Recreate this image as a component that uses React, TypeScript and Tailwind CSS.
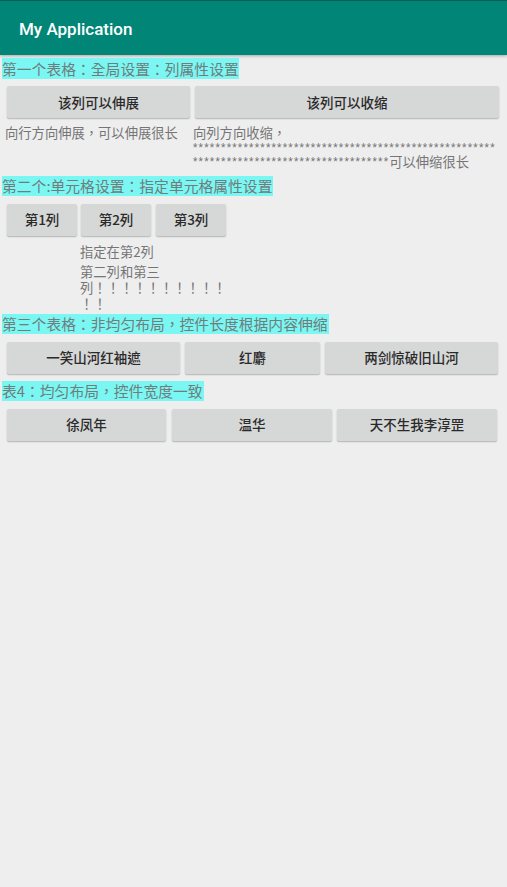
import React from "react";

const cjk = '"Noto Sans CJK TC", "Noto Sans CJK SC", sans-serif';

function Btn({ w, ml = 0, children }: { w: number; ml?: number; children: React.ReactNode }) {
  return (
    <div
      className="h-[32px] rounded-[2px] bg-[#d6d7d7] shadow-[0_1px_1.5px_rgba(0,0,0,0.25)] flex items-center justify-center text-[13.5px] font-medium text-[#2a2a2a] shrink-0"
      style={{ width: w, marginLeft: ml }}
    >
      {children}
    </div>
  );
}

function Title({ children }: { children: React.ReactNode }) {
  return (
    <div className="pl-[2px] h-[20px]">
      <span className="inline-block h-[20px] leading-[20px] bg-[#7bf7f3] text-[14.8px] text-[#6f7d7c] pr-[1px] align-top">{children}</span>
    </div>
  );
}

const starCls = "text-[10px] tracking-[1.3px] leading-[14.5px] align-top";

export default function App() {
  const stars1 = "*".repeat(54);
  const stars2 = "*".repeat(35);
  return (
    <div className="min-h-[887px] w-[507px] bg-[#eeeeee]" style={{ fontFamily: cjk }}>
      {/* Toolbar */}
      <div className="h-[55px] bg-[#008577] border-t border-[#0b5c55] shadow-[0_1px_3px_rgba(0,0,0,0.3)] flex items-center pl-[19px] pt-[4px]">
        <span className="text-white text-[17px] font-medium" style={{ fontFamily: "Roboto, sans-serif" }}>
          My Application
        </span>
      </div>

      <div className="pt-[3px]">
        <div className="h-[21px] pl-[2px]">
          <span className="inline-block h-[21px] leading-[21px] bg-[#7bf7f3] text-[14.8px] text-[#6f7d7c] align-top">第一个表格：全局设置：列属性设置</span>
        </div>

        {/* Table 1 */}
        <div className="flex pl-[7px] mt-[7px]">
          <Btn w={183}>该列可以伸展</Btn>
          <Btn w={304} ml={5}>该列可以收缩</Btn>
        </div>
        <div className="flex mt-[8px] text-[13.3px] leading-[14.5px] text-[#757575]">
          <div className="w-[193px] pl-[5px] shrink-0 h-[14.5px] whitespace-nowrap">向行方向伸展，可以伸展很长</div>
          <div className="w-[310px] shrink-0">
            <div className="h-[14.5px] whitespace-nowrap">向列方向收缩，</div>
            <div className="h-[14.5px] overflow-hidden whitespace-nowrap">
              <span className={starCls} style={{ fontFamily: "Roboto, sans-serif" }}>{stars1}</span>
            </div>
            <div className="h-[14.5px] whitespace-nowrap">
              <span className={starCls} style={{ fontFamily: "Roboto, sans-serif" }}>{stars2}</span>
              <span className="align-top">可以伸缩很长</span>
            </div>
          </div>
        </div>

        <div className="mt-[6px]">
          <Title>第二个:单元格设置：指定单元格属性设置</Title>
        </div>

        {/* Table 2 */}
        <div className="flex pl-[7px] mt-[8px]">
          <Btn w={70}>第1列</Btn>
          <Btn w={70} ml={4}>第2列</Btn>
          <Btn w={70} ml={5}>第3列</Btn>
        </div>
        <div className="pl-[80px] mt-[8px] text-[13.3px] leading-[16px] text-[#757575]">
          <div className="h-[16px] whitespace-nowrap">指定在第2列</div>
          <div className="mt-[4px] h-[16px] whitespace-nowrap">第二列和第三</div>
          <div className="h-[16px] whitespace-nowrap">列！！！！！！！！！！</div>
          <div className="h-[16px] whitespace-nowrap">！！</div>
        </div>

        <div className="mt-[2px]">
          <Title>第三个表格：非均匀布局，控件长度根据内容伸缩</Title>
        </div>

        {/* Table 3 */}
        <div className="flex pl-[7px] mt-[8px]">
          <Btn w={173}>一笑山河红袖遮</Btn>
          <Btn w={135} ml={5}>红麝</Btn>
          <Btn w={173} ml={5}>两剑惊破旧山河</Btn>
        </div>

        <div className="mt-[7px]">
          <Title>表4：均匀布局，控件宽度一致</Title>
        </div>

        {/* Table 4 */}
        <div className="flex pl-[7px] mt-[8px]">
          <Btn w={159}>徐凤年</Btn>
          <Btn w={160} ml={6}>温华</Btn>
          <Btn w={160} ml={5}>天不生我李淳罡</Btn>
        </div>
      </div>
    </div>
  );
}
